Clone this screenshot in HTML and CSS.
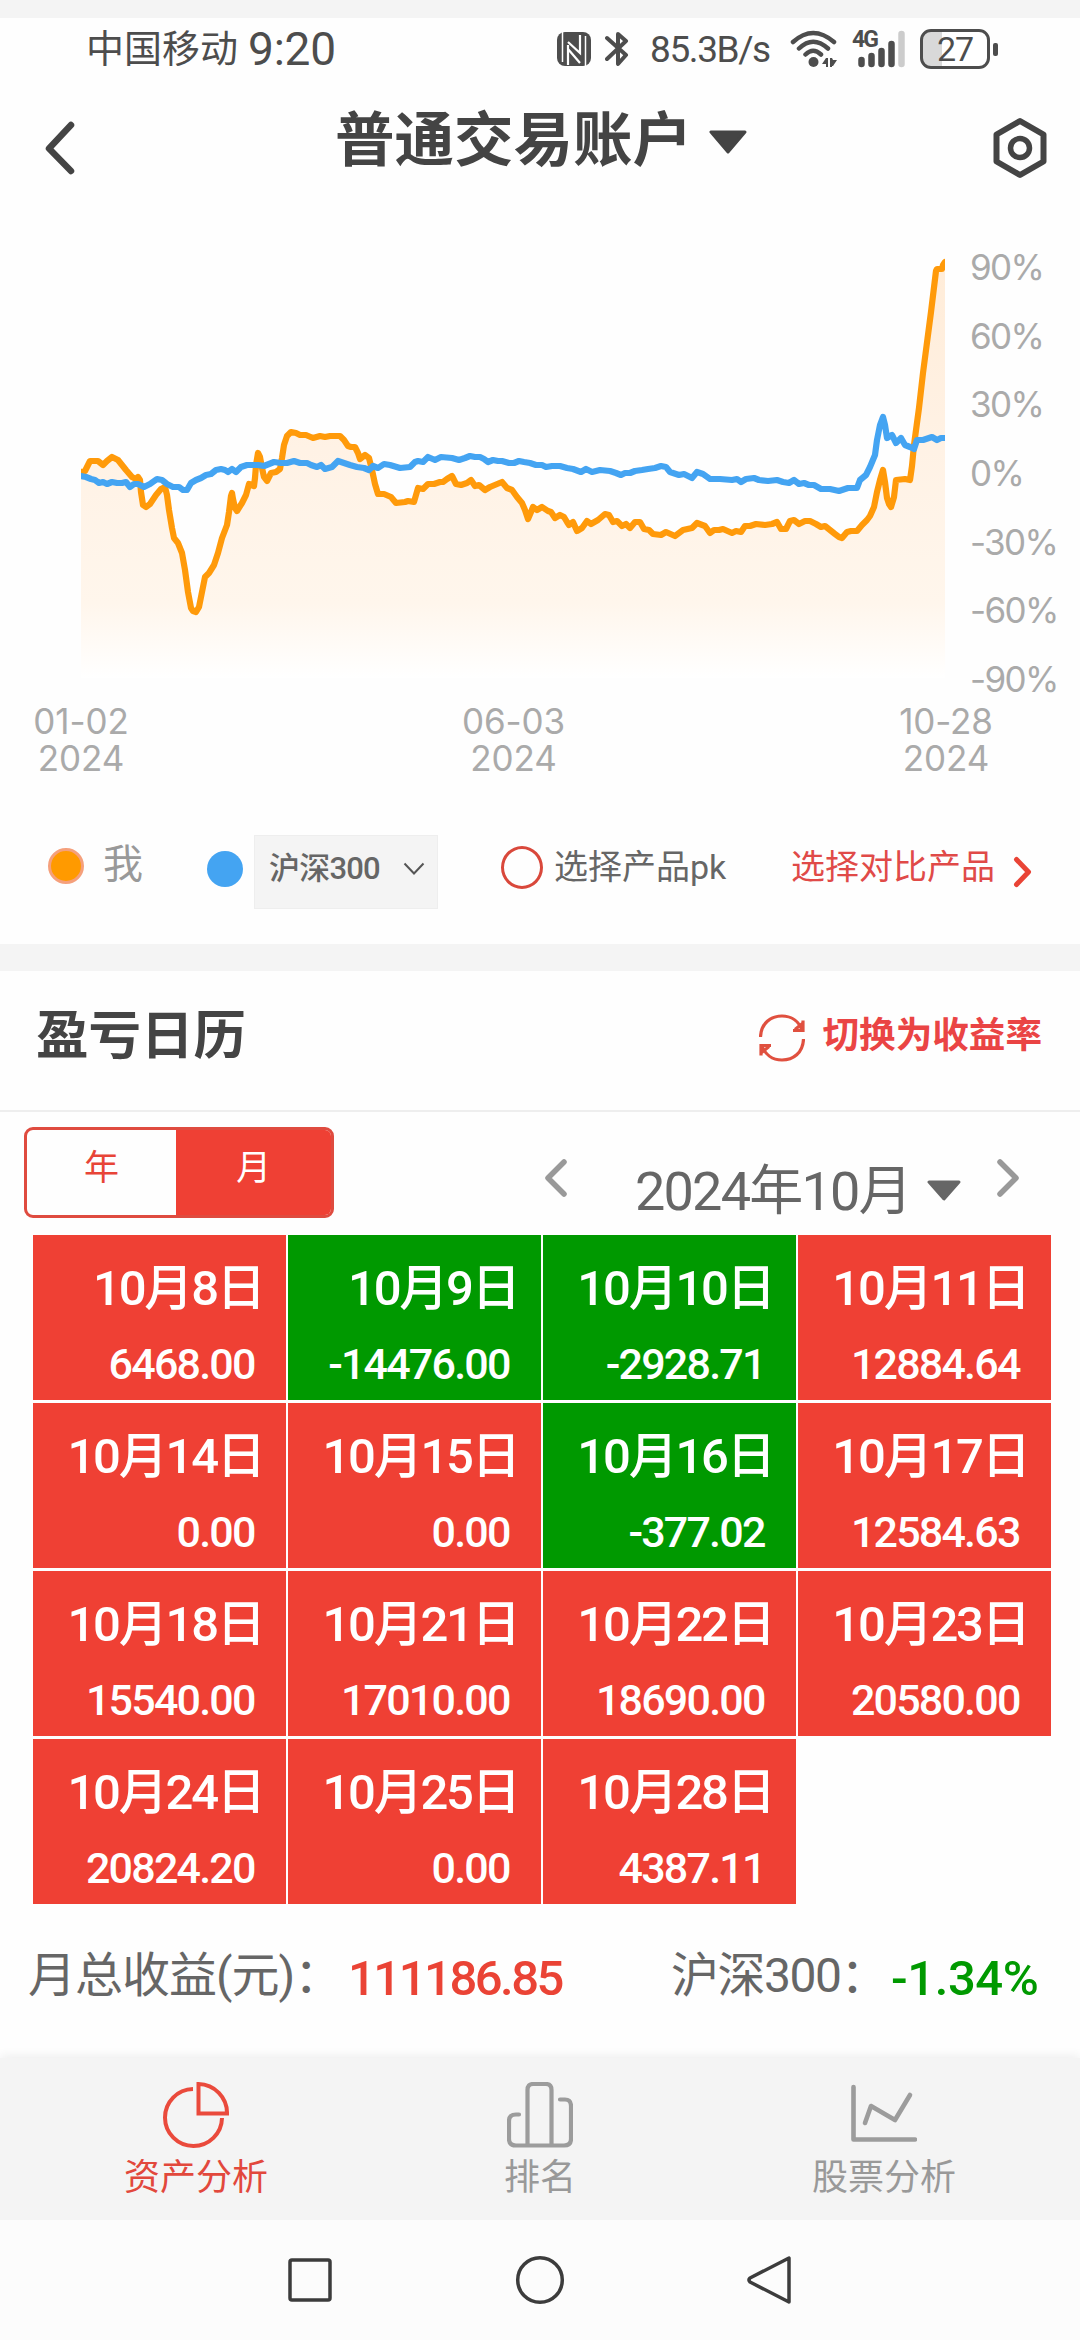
FILE: index.html
```
<!DOCTYPE html>
<html lang="zh-CN">
<head>
	<meta charset="utf-8">
	<title>普通交易账户</title>
	<link rel="stylesheet" href="styles.css">
</head>
<body>
	<div class="statusbar">
		<span class="carrier">中国移动</span>
		<span class="clock">9:20</span>
		<svg class="nfc" width="34" height="36" viewBox="0 0 34 36">
			<rect x="0" y="1" width="34" height="34" rx="8" fill="#4d4d4d"/>
			<path d="M5.500 1v30M28.500 5v30" stroke="#fff" stroke-width="1.500" fill="none"/>
			<path d="M11 11l12 11V4M11 14v20M11 18l12 14" stroke="#fff" stroke-width="2.200" fill="none"/>
		</svg>
		<svg class="bt" width="24" height="38" viewBox="0 0 24 38">
			<path d="M2 8l19 17-8 9V4l8 7L2 29" fill="none" stroke="#4d4d4d" stroke-width="4" stroke-linejoin="round" stroke-linecap="round"/>
		</svg>
		<span class="speed">85.3B/s</span>
		<svg class="wifi" width="48" height="38" viewBox="0 0 48 38">
			<g fill="none" stroke="#4d4d4d" stroke-width="4.500" stroke-linecap="round">
				<path d="M3 12Q23-6 44 12M9 18.500Q23 5 38 18.500M15.500 24.500Q23 17 31 24.500"/>
			</g>
			<circle cx="23.500" cy="32" r="5" fill="#4d4d4d"/>
			<path d="M38 28v9h-2v-3h-4l4-6zM40 28h2l1 2h4l-4 6h-1v1h-2z" fill="#4d4d4d"/>
		</svg>
		<div class="signal">
			<span class="net">4G</span>
			<svg width="54" height="38" viewBox="0 0 54 38" stroke-width="6.500" stroke-linecap="round" stroke="#4d4d4d">
				<path d="M9.500 30v4M19.500 26v8M29.500 21v13M39.500 14v20"/>
				<path d="M49.500 4v30" stroke="#ccc"/>
			</svg>
		</div>
		<div class="battery"><span>27</span></div>
		<i class="battery-cap"></i>
	</div>

	<div class="header">
		<svg class="back" width="34" height="56" viewBox="0 0 34 56">
			<path d="M28 5L6 28.500 28 51" fill="none" stroke="#444" stroke-width="6.500" stroke-linecap="round" stroke-linejoin="round"/>
		</svg>
		<div class="title">
			<h1>普通交易账户</h1>
			<svg width="38" height="24" viewBox="0 0 38 24"><path d="M2 2h34L19 22z" fill="#444" stroke="#444" stroke-width="3" stroke-linejoin="round"/></svg>
		</div>
		<svg class="setting" width="56" height="64" viewBox="0 0 56 64" fill="none" stroke="#444">
			<path d="M28 5L51.500 18.500V45.500L28 59 4.500 45.500V18.500z" stroke-width="6" stroke-linejoin="round"/>
			<circle cx="28" cy="32" r="9.500" stroke-width="5.500"/>
		</svg>
	</div>

	<div class="chart">
		<div class="plot-row">
			<svg class="plot" width="864" height="440" viewBox="81 240 864 440">
				<defs>
					<linearGradient id="fade" x1="0" y1="0" x2="0" y2="1">
						<stop offset="0" stop-color="#ffecd8"/>
						<stop offset=".45" stop-color="#fff2e5"/>
						<stop offset=".82" stop-color="#fff6ec"/>
						<stop offset="1" stop-color="#fff"/>
					</linearGradient>
				</defs>
				<path fill="url(#fade)" d="M81 472L85 471 90 461 98 461 103 465 107 461 112 457 118 460 126 470 132 477 136 479 138 477 140 480 141 492 143 505 146 507 150 504 156 495 161 489 165 487 167 495 169 510 172 528 174 538 178 543 182 553 185 570 188 592 191 608 193 611 196 612 199 607 202 592 205 577 209 573 214 565 218 553 222 538 227 525 229 512 231 496 232 493 233 499 235 508 237 511 242 503 246 495 249 484 254 486 255 478 256 465 258 453 260 457 262 468 264 477 267 481 271 473 276 472 280 469 282 458 284 445 287 436 291 432 300 435 306 435 313 438 320 436 340 436 344 440 348 446 355 447 360 459 365 455 369 458 372 470 375 484 378 494 384 494 391 497 396 503 414 502 418 488 428 484 440 482 452 476 456 484 461 485 471 480 475 486 479 485 485 490 502 482 512 490 522 503 528 519 533 507 542 507 555 518 564 517 569 525 573 522 577 531 587 521 591 524 605 514 613 522 617 521 622 526 626 524 630 528 635 522 640 522 644 529 653 534 661 535 666 532 675 536 683 530 692 528 697 523 705 526 710 533 723 529 732 533 741 532 745 526 765 525 777 522 781 529 786 529 790 521 799 524 805 521 821 527 825 526 842 538 851 531 857 531 870 516 877 492 883 471 887 498 891 507 896 480 910 480 919 408 931 312 936 271 942 269 945 262V678H81z"/>
				<g fill="none" stroke-width="6.200" stroke-linejoin="round" stroke-linecap="round">
					<path stroke="#ff9a0a" d="M81 472L85 471 90 461 98 461 103 465 107 461 112 457 118 460 126 470 132 477 136 479 138 477 140 480 141 492 143 505 146 507 150 504 156 495 161 489 165 487 167 495 169 510 172 528 174 538 178 543 182 553 185 570 188 592 191 608 193 611 196 612 199 607 202 592 205 577 209 573 214 565 218 553 222 538 227 525 229 512 231 496 232 493 233 499 235 508 237 511 242 503 246 495 249 484 254 486 255 478 256 465 258 453 260 457 262 468 264 477 267 481 271 473 276 472 280 469 282 458 284 445 287 436 291 432 296 433 300 435 306 435 313 438 320 436 325 437 330 436 340 436 344 440 348 446 351 447 355 447 358 453 360 459 365 455 369 458 372 470 375 484 378 494 384 494 391 497 396 503 405 502 408 501 414 502 416 495 418 488 423 489 428 484 434 484 440 482 443 482 447 479 452 476 456 484 461 485 467 483 471 480 475 486 479 485 485 490 490 487 502 482 507 488 512 490 517 497 522 503 525 510 528 519 531 512 533 507 537 510 542 507 548 511 551 512 555 518 560 515 564 517 567 522 569 525 573 522 577 531 582 528 587 521 591 524 598 520 605 514 609 515 613 522 617 521 622 526 626 524 630 528 635 522 640 522 644 529 649 530 653 534 661 535 666 532 675 536 683 530 692 528 697 523 705 526 710 533 714 530 719 530 723 529 732 533 736 531 741 532 745 526 750 526 756 524 765 525 772 524 777 522 781 529 786 529 790 521 794 520 799 524 805 521 810 521 816 524 821 527 825 526 830 530 835 534 839 537 842 538 847 532 851 531 857 531 862 525 867 520 870 516 874 507 877 492 880 480 883 470 885 482 887 498 889 504 891 507 894 497 896 480 905 479 910 480 912 466 914 445 919 408 923 373 931 312 936 271 937 269 942 269 943 265 945 262"/>
					<path stroke="#44a4f2" d="M81 476L86 477 91 479 95 480 99 483 103 482 107 484 112 482 117 483 122 483 126 482 130 487 134 484 138 484 144 487 150 484 157 479 162 480 167 484 173 487 179 487 183 490 187 490 191 483 196 480 201 478 206 475 211 474 216 470 221 469 225 470 228 472 232 469 236 472 241 467 247 465 253 465 258 465 264 466 269 464 274 462 281 463 287 463 294 461 300 463 307 463 311 465 317 467 321 465 325 469 332 467 338 461 344 463 350 465 357 467 364 468 369 470 373 466 378 468 384 464 390 465 400 468 410 467 415 462 418 461 423 462 428 457 435 460 441 457 452 458 459 460 465 458 470 456 475 457 480 457 484 459 488 462 493 460 498 461 502 461 509 463 514 463 519 461 524 462 530 463 536 465 542 465 546 467 552 466 560 466 567 468 573 469 581 472 586 469 592 472 600 470 610 471 616 473 621 475 625 473 630 473 635 471 642 470 648 469 655 468 661 466 666 467 670 472 679 475 684 474 692 478 697 472 703 474 710 479 720 479 732 480 737 479 741 482 746 479 754 478 759 480 768 481 777 480 783 482 789 483 794 480 799 484 804 483 809 485 814 485 821 489 830 489 839 491 848 488 857 488 860 480 866 475 870 467 875 455 877 440 880 425 883 417 885 425 887 438 892 435 896 443 901 438 905 445 910 447 914 449 917 440 923 440 932 437 937 440 941 438 945 438"/>
				</g>
			</svg>
			<div class="yaxis">
				<span>90%</span><span>60%</span><span>30%</span><span>0%</span><span>-30%</span><span>-60%</span><span>-90%</span>
			</div>
		</div>
		<div class="xaxis">
			<span>01-02<br>2024</span>
			<span>06-03<br>2024</span>
			<span>10-28<br>2024</span>
		</div>
	</div>

	<div class="legend">
		<i class="dot me"></i>
		<span class="me-text">我</span>
		<i class="dot index"></i>
		<div class="select">
			<span>沪深300</span>
			<svg width="22" height="14" viewBox="0 0 22 14"><path d="M1.500 1.500L11 11.500 20.500 1.500" fill="none" stroke="#555" stroke-width="2"/></svg>
		</div>
		<i class="radio"></i>
		<span class="pk">选择产品pk</span>
		<span class="compare">选择对比产品</span>
		<svg class="more" width="20" height="34" viewBox="0 0 20 34"><path d="M3.500 4.500L15.500 17 3.500 29.500" fill="none" stroke="#e94436" stroke-width="5" stroke-linecap="round" stroke-linejoin="round"/></svg>
	</div>

	<div class="section-title">
		<h2>盈亏日历</h2>
		<svg width="46" height="48" viewBox="0 0 46 48" fill="none" stroke="#e0503f" stroke-width="3.200">
			<path d="M1.500 23C2 9 12 2 23 2 33 2 40 8 43 16M44.500 25C44 39 34 46 23 46 13 46 6 40 3 32"/>
			<path d="M34 16.500H44V6.500M36 15.500L44 9M12 31.500H2V41.500M10 32.500L2 39"/>
		</svg>
		<span>切换为收益率</span>
	</div>

	<div class="toolbar">
		<div class="tabs">
			<span class="tab">年</span>
			<span class="tab active">月</span>
		</div>
		<svg class="prev" width="24" height="40" viewBox="0 0 24 40"><path d="M20 4L4 20 20 36" fill="none" stroke="#999" stroke-width="5.500" stroke-linecap="round" stroke-linejoin="round"/></svg>
		<span class="month">2024年10月</span>
		<svg class="drop" width="34" height="22" viewBox="0 0 34 22"><path d="M2 2h30L17 19z" fill="#666" stroke="#666" stroke-width="3" stroke-linejoin="round"/></svg>
		<svg class="next" width="24" height="40" viewBox="0 0 24 40"><path d="M4 4L20 20 4 36" fill="none" stroke="#999" stroke-width="5.500" stroke-linecap="round" stroke-linejoin="round"/></svg>
	</div>

	<div class="calendar">
		<div class="day"><b>10月8日</b><span>6468.00</span></div>
		<div class="day down"><b>10月9日</b><span>-14476.00</span></div>
		<div class="day down"><b>10月10日</b><span>-2928.71</span></div>
		<div class="day"><b>10月11日</b><span>12884.64</span></div>
		<div class="day"><b>10月14日</b><span>0.00</span></div>
		<div class="day"><b>10月15日</b><span>0.00</span></div>
		<div class="day down"><b>10月16日</b><span>-377.02</span></div>
		<div class="day"><b>10月17日</b><span>12584.63</span></div>
		<div class="day"><b>10月18日</b><span>15540.00</span></div>
		<div class="day"><b>10月21日</b><span>17010.00</span></div>
		<div class="day"><b>10月22日</b><span>18690.00</span></div>
		<div class="day"><b>10月23日</b><span>20580.00</span></div>
		<div class="day"><b>10月24日</b><span>20824.20</span></div>
		<div class="day"><b>10月25日</b><span>0.00</span></div>
		<div class="day"><b>10月28日</b><span>4387.11</span></div>
	</div>

	<div class="summary">
		<span class="label">月总收益(元)：</span>
		<span class="total">111186.85</span>
		<span class="label right">沪深300：</span>
		<span class="rate">-1.34%</span>
	</div>

	<div class="tabbar">
		<div class="item on">
			<svg width="66" height="66" viewBox="0 0 66 66" fill="none" stroke="#ea4a3c" stroke-width="4">
				<path d="M30 7A28.500 28.500 0 1 0 59 36"/>
				<path d="M35.500 2V31.500H64A29 29 0 0 0 35.500 2z"/>
			</svg>
			<span>资产分析</span>
		</div>
		<div class="item">
			<svg width="66" height="66" viewBox="0 0 66 66" fill="none" stroke="#9c9c9c" stroke-width="4.200" stroke-linecap="round">
				<path d="M20.500 63V8Q20.500 2 26 2H39Q44.500 2 44.500 8V63"/>
				<path d="M12 32.500H9Q2 32.500 2 39V57Q2 63.500 9 63.500H57Q64 63.500 64 57V24Q64 17.500 58 17.500H53"/>
			</svg>
			<span>排名</span>
		</div>
		<div class="item">
			<svg width="66" height="66" viewBox="0 0 66 66" fill="none" stroke="#9c9c9c" stroke-width="4.600" stroke-linecap="round" stroke-linejoin="round">
				<path d="M2.500 5V57.500H64"/>
				<path d="M14 41L20 24 44 38 59 13"/>
			</svg>
			<span>股票分析</span>
		</div>
	</div>

	<div class="navbar">
		<svg width="50" height="50" viewBox="0 0 50 50"><rect x="5" y="5" width="40" height="40" rx="2" fill="none" stroke="#3c3c3c" stroke-width="3.500"/></svg>
		<svg width="50" height="50" viewBox="0 0 50 50"><circle cx="25" cy="25" r="22.300" fill="none" stroke="#3c3c3c" stroke-width="3.500"/></svg>
		<svg width="50" height="50" viewBox="0 0 50 50"><path d="M44 3V47L5 27Q3 25 5 23z" fill="none" stroke="#3c3c3c" stroke-width="3.500" stroke-linejoin="round"/></svg>
	</div>
</body>
</html>
```
FILE: styles.css
```
*{
	box-sizing: border-box;
}
body{
	margin: 0;
	width: 1080px;
	height: 2340px;
	overflow: hidden;
	border-top: 18px solid #f4f4f4;
	background: #fefefe;
	color: #444;
	font-family: Roboto, 'Noto Sans CJK SC', sans-serif;
	line-height: 1;
}
svg{
	display: block;
	flex: none;
}
span{
	white-space: nowrap;
}
h1, h2{
	margin: 0;
}

/* status bar */
.statusbar{
	display: flex;
	align-items: center;
	height: 62px;
	padding-left: 86px;
	color: #4d4d4d;
}
.carrier{
	width: 162px;
	font-size: 38px;
}
.clock{
	width: 309px;
	font-size: 46px;
	letter-spacing: -.2px;
}
.bt{
	margin-left: 14px;
}
.speed{
	width: 120px;
	margin-left: 21px;
	font-size: 37px;
	letter-spacing: -1.4px;
}
.wifi{
	margin-left: 20px;
}
.signal{
	position: relative;
	margin-left: 14px;
}
.net{
	position: absolute;
	left: 0;
	top: -2px;
	font-size: 23px;
	font-weight: 700;
	letter-spacing: -2px;
}
.battery{
	width: 70px;
	height: 40px;
	margin-left: 14px;
	border: 3px solid #4d4d4d;
	border-radius: 11px;
	background: linear-gradient(to right, #d9d9d9 19px, #fff 19px);
	font-size: 34px;
	line-height: 35px;
	text-align: center;
	letter-spacing: -1px;
}
.battery-cap{
	width: 5px;
	height: 13px;
	margin-left: 3px;
	border-radius: 2px;
	background: #4d4d4d;
}

/* header */
.header{
	display: flex;
	align-items: center;
	height: 136px;
	padding: 0 32px 0 43px;
}
.title{
	display: flex;
	align-items: center;
	margin: 0 auto 13px 258px;
}
.title h1{
	font-size: 59.500px;
	font-weight: 700;
}
.title svg{
	margin-left: 17px;
}

/* chart */
.chart{
	height: 583px;
	padding-top: 24px;
}
.plot-row{
	display: flex;
	height: 462px;
	padding-left: 81px;
}
.yaxis{
	display: flex;
	flex-direction: column;
	margin: -8px 0 0 25px;
	font-family: Inter, sans-serif;
	font-size: 35px;
	color: #aaa;
	letter-spacing: -1.6px;
}
.yaxis span{
	height: 68.7px;
	line-height: 70px;
}
.xaxis{
	display: flex;
	justify-content: space-between;
	padding: 1px 79px 0 26px;
	font-family: Inter, sans-serif;
	font-size: 35px;
	line-height: 36.5px;
	letter-spacing: -.1px;
	text-align: center;
	color: #aaa;
}
.xaxis span{
	width: 110px;
}

/* legend */
.legend{
	display: flex;
	align-items: center;
	height: 145px;
	padding: 1px 0 0 48px;
	font-size: 34px;
	color: #666;
}
.dot{
	width: 36px;
	height: 36px;
	border-radius: 50%;
}
.me{
	margin-bottom: 12px;
	border: 3px solid #f5a07c;
	background: #ff9a00;
}
.me-text{
	width: 123px;
	padding: 0 0 14px 19px;
	font-size: 40px;
	color: #999;
}
.index{
	background: #44a4f2;
	margin-bottom: 7px;
}
.select{
	display: flex;
	justify-content: space-between;
	align-items: center;
	width: 184px;
	height: 74px;
	margin: 0 63px 0 11px;
	padding: 0 12px 7px 14px;
	border: 1px solid #eee;
	background: #f4f4f4;
	font-size: 31px;
	font-weight: 500;
	letter-spacing: -.8px;
}
.radio{
	width: 42px;
	height: 43px;
	margin: 0 11px 9px 0;
	border: 3px solid #d9483b;
	border-radius: 50%;
}
.pk{
	width: 237px;
	margin-bottom: 10px;
}
.compare{
	margin-bottom: 10px;
	color: #e04a48;
}
.more{
	margin-left: 18px;
}

/* profit calendar */
.section-title{
	display: flex;
	align-items: center;
	height: 168px;
	padding: 0 38px 0 36px;
	border-top: 27px solid #f4f4f4;
	border-bottom: 2px solid #eee;
}
.section-title h2{
	margin: 0 auto 8px 0;
	font-size: 52.500px;
	font-weight: 700;
}
.section-title span{
	margin: 0 0 8px 18px;
	font-size: 36.6px;
	font-weight: 700;
	color: #ea4444;
}
.section-title svg{
	margin-bottom: 5px;
}
.toolbar{
	display: flex;
	height: 123px;
	padding: 15px 0 0 24px;
}
.tabs{
	display: flex;
	width: 310px;
	height: 91px;
	border: 3px solid #df4b3f;
	border-radius: 9px;
	overflow: hidden;
}
.tab{
	width: 149px;
	font-size: 35px;
	line-height: 77px;
	text-align: center;
	color: #e84437;
}
.tab.active{
	width: 155px;
	background: #ef4034;
	color: #fff;
}
.prev{
	margin: 31px 0 0 210px;
}
.month{
	width: 292px;
	margin: 38px 0 0 67px;
	font-size: 54px;
	font-weight: 400;
	letter-spacing: -1.8px;
	color: #666;
}
.drop{
	margin-top: 53px;
}
.next{
	margin: 31px 0 0 35px;
}
.calendar{
	display: grid;
	grid-template-columns: repeat(4, 252.6px);
	grid-auto-rows: 165px;
	gap: 3px 2.4px;
	padding-left: 33px;
}
.day{
	display: flex;
	flex-direction: column;
	align-items: flex-end;
	padding: 29px 22px 0 0;
	background: #ef4034;
	color: #fff;
}
.day.down{
	background: #090;
}
.day b{
	font-size: 49px;
	font-weight: 500;
	letter-spacing: -2.2px;
}
.day span{
	margin: 30px 9px 0 0;
	font-size: 43px;
	font-weight: 500;
	letter-spacing: -1.8px;
}
.summary{
	display: flex;
	align-items: center;
	height: 154px;
	padding: 0 0 6px 28px;
	font-size: 48px;
}
.label{
	width: 320px;
	padding-bottom: 4px;
	letter-spacing: -1px;
	color: #666;
}
.label.right{
	width: 220px;
	letter-spacing: -1.5px;
}
.total, .rate{
	width: 323px;
	font-size: 49px;
	font-weight: 500;
	letter-spacing: -2.5px;
	color: #ea4335;
}
.rate{
	width: auto;
	letter-spacing: -.4px;
	color: #090;
}

/* bottom bars */
.tabbar{
	display: flex;
	height: 162px;
	padding: 24px 24px 0;
	background: #f4f4f4;
	box-shadow: 0 -2px 10px rgba(0, 0, 0, .07);
}
.item{
	flex: 1;
	display: flex;
	flex-direction: column;
	align-items: center;
	font-size: 36px;
	color: #999;
}
.item span{
	margin-top: 12px;
}
.item.on{
	color: #e2483c;
}
.navbar{
	display: flex;
	justify-content: center;
	gap: 180px;
	height: 120px;
	padding-top: 35px;
	background: #fcfcfc;
}
```
